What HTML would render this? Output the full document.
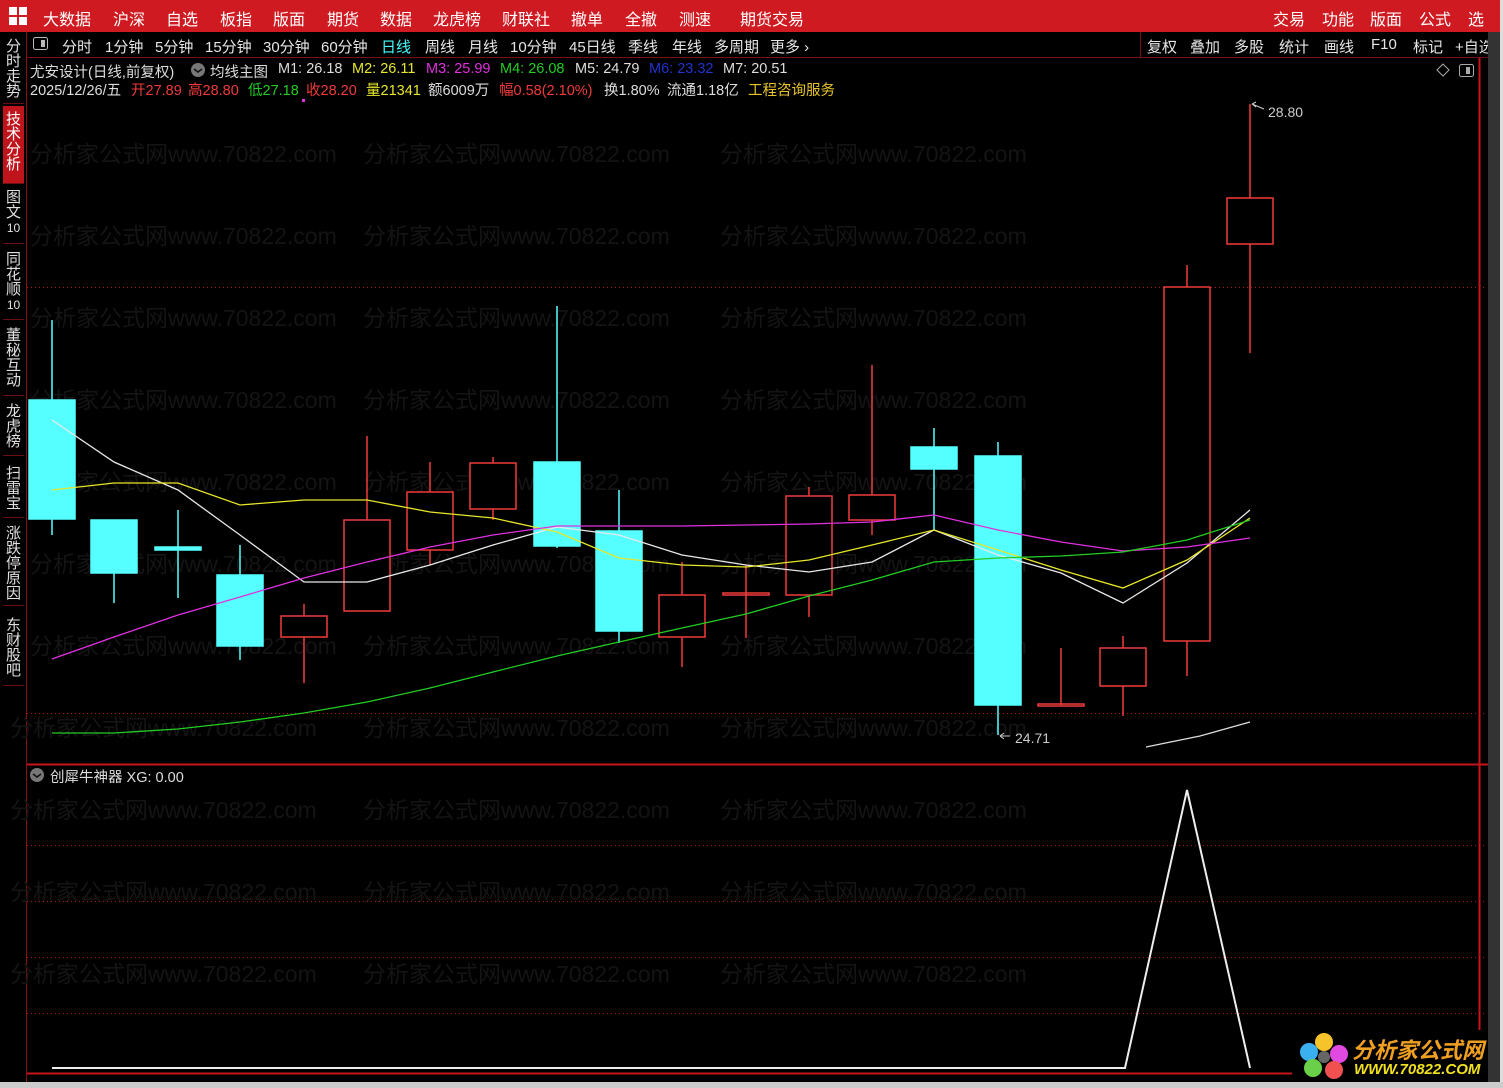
<!DOCTYPE html>
<html><head><meta charset="utf-8"><style>
*{margin:0;padding:0;box-sizing:border-box}
body{width:1503px;height:1088px;background:#000;overflow:hidden;position:relative;font-family:"Liberation Sans","Noto Sans CJK SC",sans-serif;color:#ddd}
#top{position:absolute;left:0;top:0;width:1500px;height:32px;background:#cf1a21}
#top span{position:absolute;top:6px;font-size:16px;color:#fff}
#tb{position:absolute;left:27px;top:32px;width:1461px;height:26px;border-bottom:1px solid #7a1010;overflow:hidden}
#tb span{position:absolute;top:4px;font-size:15px;color:#e6e6e6;white-space:nowrap}
#side{position:absolute;left:0;top:32px;width:27px;height:1056px;background:#000;border-right:1px solid #8a1010}
.si{position:absolute;left:3px;width:21px;font-size:15px;line-height:15px;color:#e0e0e0;text-align:center;border-bottom:1px solid #6a1010}
.wm{position:absolute;font-size:23px;color:#141414;white-space:nowrap}
.il{position:absolute;font-size:14.5px;white-space:nowrap;color:#ddd}
</style></head><body>
<div id="top">
<svg style="position:absolute;left:9px;top:7px" width="19" height="19"><rect x="0" y="0" width="8" height="8" fill="#fff"/><rect x="10" y="0" width="8" height="8" fill="#fff"/><rect x="0" y="10" width="8" height="8" fill="#fff"/><rect x="10" y="10" width="8" height="8" fill="#fff"/></svg>
<span style="left:43px">大数据</span><span style="left:113px">沪深</span><span style="left:166px">自选</span><span style="left:220px">板指</span><span style="left:273px">版面</span><span style="left:327px">期货</span><span style="left:380px">数据</span><span style="left:433px">龙虎榜</span><span style="left:502px">财联社</span><span style="left:571px">撤单</span><span style="left:625px">全撤</span><span style="left:679px">测速</span><span style="left:740px">期货交易</span>
<span style="left:1273px">交易</span><span style="left:1322px">功能</span><span style="left:1370px">版面</span><span style="left:1419px">公式</span><span style="left:1468px">选</span>
</div>
<div id="side">
<div class="si" style="top:4px;height:68px;padding-top:3px">分时走势</div>
<div class="si" style="top:74px;height:78px;padding-top:6px;background:#c0141c;color:#fff">技术分析</div>
<div class="si" style="top:154px;height:58px;padding-top:4px">图文<br><span style="font-size:12px">10</span></div>
<div class="si" style="top:214px;height:74px;padding-top:6px">同花顺<br><span style="font-size:12px">10</span></div>
<div class="si" style="top:290px;height:74px;padding-top:6px">董秘互动</div>
<div class="si" style="top:366px;height:58px;padding-top:6px">龙虎榜</div>
<div class="si" style="top:426px;height:60px;padding-top:8px">扫雷宝</div>
<div class="si" style="top:488px;height:86px;padding-top:6px">涨跌停原因</div>
<div class="si" style="top:576px;height:78px;padding-top:10px">东财股吧</div>
</div>
<div id="tb">
<svg style="position:absolute;left:6px;top:5px" width="15" height="13"><rect x="0.5" y="0.5" width="14" height="12" rx="2" fill="none" stroke="#bbb"/><rect x="8" y="3" width="4" height="7" fill="#bbb"/></svg>
<span style="left:35px">分时</span><span style="left:78px">1分钟</span><span style="left:128px">5分钟</span><span style="left:178px">15分钟</span><span style="left:236px">30分钟</span><span style="left:294px">60分钟</span><span style="left:354px;color:#4ff">日线</span><span style="left:398px">周线</span><span style="left:441px">月线</span><span style="left:483px">10分钟</span><span style="left:542px">45日线</span><span style="left:601px">季线</span><span style="left:645px">年线</span><span style="left:687px">多周期</span><span style="left:743px">更多 ›</span>
<div style="position:absolute;left:1113px;top:0;height:26px;width:350px;border-left:1px solid #7a1010"></div>
<span style="left:1120px">复权</span><span style="left:1163px">叠加</span><span style="left:1207px">多股</span><span style="left:1252px">统计</span><span style="left:1297px">画线</span><span style="left:1344px">F10</span><span style="left:1386px">标记</span><span style="left:1428px">+自选</span>
</div>
<div class="wm" style="left:30px;top:135px">分析家公式网www.70822.com</div><div class="wm" style="left:363px;top:135px">分析家公式网www.70822.com</div><div class="wm" style="left:720px;top:135px">分析家公式网www.70822.com</div>
<div class="wm" style="left:30px;top:217px">分析家公式网www.70822.com</div><div class="wm" style="left:363px;top:217px">分析家公式网www.70822.com</div><div class="wm" style="left:720px;top:217px">分析家公式网www.70822.com</div>
<div class="wm" style="left:30px;top:299px">分析家公式网www.70822.com</div><div class="wm" style="left:363px;top:299px">分析家公式网www.70822.com</div><div class="wm" style="left:720px;top:299px">分析家公式网www.70822.com</div>
<div class="wm" style="left:30px;top:381px">分析家公式网www.70822.com</div><div class="wm" style="left:363px;top:381px">分析家公式网www.70822.com</div><div class="wm" style="left:720px;top:381px">分析家公式网www.70822.com</div>
<div class="wm" style="left:30px;top:463px">分析家公式网www.70822.com</div><div class="wm" style="left:363px;top:463px">分析家公式网www.70822.com</div><div class="wm" style="left:720px;top:463px">分析家公式网www.70822.com</div>
<div class="wm" style="left:30px;top:545px">分析家公式网www.70822.com</div><div class="wm" style="left:363px;top:545px">分析家公式网www.70822.com</div><div class="wm" style="left:720px;top:545px">分析家公式网www.70822.com</div>
<div class="wm" style="left:30px;top:627px">分析家公式网www.70822.com</div><div class="wm" style="left:363px;top:627px">分析家公式网www.70822.com</div><div class="wm" style="left:720px;top:627px">分析家公式网www.70822.com</div>
<div class="wm" style="left:10px;top:709px">分析家公式网www.70822.com</div><div class="wm" style="left:363px;top:709px">分析家公式网www.70822.com</div><div class="wm" style="left:720px;top:709px">分析家公式网www.70822.com</div>
<div class="wm" style="left:10px;top:791px">分析家公式网www.70822.com</div><div class="wm" style="left:363px;top:791px">分析家公式网www.70822.com</div><div class="wm" style="left:720px;top:791px">分析家公式网www.70822.com</div>
<div class="wm" style="left:10px;top:873px">分析家公式网www.70822.com</div><div class="wm" style="left:363px;top:873px">分析家公式网www.70822.com</div><div class="wm" style="left:720px;top:873px">分析家公式网www.70822.com</div>
<div class="wm" style="left:10px;top:955px">分析家公式网www.70822.com</div><div class="wm" style="left:363px;top:955px">分析家公式网www.70822.com</div><div class="wm" style="left:720px;top:955px">分析家公式网www.70822.com</div>
<svg style="position:absolute;left:0;top:0" width="1503" height="1088">
<g stroke="#b01818" stroke-width="1" stroke-dasharray="1,3">
<line x1="27" y1="287.5" x2="1486" y2="287.5"/><line x1="27" y1="713.5" x2="1486" y2="713.5"/>
<line x1="27" y1="845.5" x2="1486" y2="845.5"/><line x1="27" y1="901.5" x2="1486" y2="901.5"/><line x1="27" y1="957.5" x2="1486" y2="957.5"/><line x1="27" y1="1013.5" x2="1486" y2="1013.5"/>
</g>
<line x1="27" y1="764.5" x2="1488" y2="764.5" stroke="#c8141c" stroke-width="2"/>
<line x1="27" y1="1073.5" x2="1488" y2="1073.5" stroke="#c8141c" stroke-width="2"/>
<line x1="1479.5" y1="58" x2="1479.5" y2="1074" stroke="#c8141c" stroke-width="2"/>
<rect x="1488" y="32" width="12" height="1056" fill="#333"/>
<rect x="1500" y="0" width="3" height="1088" fill="#ddd"/>
<rect x="0" y="1082" width="1503" height="6" fill="#ccc"/>
<g stroke="#5ff" fill="#5ff" stroke-width="1.5">
<line x1="52" y1="320" x2="52" y2="535"/><rect x="29" y="400" width="46" height="119"/>
<line x1="114" y1="520" x2="114" y2="603"/><rect x="91" y="520" width="46" height="53"/>
<line x1="178" y1="510" x2="178" y2="598"/><rect x="155" y="547" width="46" height="3"/>
<line x1="240" y1="545" x2="240" y2="660"/><rect x="217" y="575" width="46" height="71"/>
<line x1="557" y1="306" x2="557" y2="548"/><rect x="534" y="462" width="46" height="84"/>
<line x1="619" y1="490" x2="619" y2="643"/><rect x="596" y="531" width="46" height="100"/>
<line x1="934" y1="428" x2="934" y2="530"/><rect x="911" y="447" width="46" height="22"/>
<line x1="998" y1="442" x2="998" y2="735"/><rect x="975" y="456" width="46" height="249"/>
</g>
<g stroke="#f03a3a" fill="none" stroke-width="1.5">
<line x1="304" y1="604" x2="304" y2="683"/><rect x="281" y="616" width="46" height="21" fill="#000"/>
<line x1="367" y1="436" x2="367" y2="611"/><rect x="344" y="520" width="46" height="91" fill="#000"/>
<line x1="430" y1="462" x2="430" y2="565"/><rect x="407" y="492" width="46" height="58" fill="#000"/>
<line x1="493" y1="457" x2="493" y2="520"/><rect x="470" y="463" width="46" height="46" fill="#000"/>
<line x1="682" y1="562" x2="682" y2="667"/><rect x="659" y="595" width="46" height="42" fill="#000"/>
<line x1="746" y1="565" x2="746" y2="638"/><rect x="723" y="593" width="46" height="2"/>
<line x1="809" y1="487" x2="809" y2="617"/><rect x="786" y="496" width="46" height="99" fill="#000"/>
<line x1="872" y1="365" x2="872" y2="535"/><rect x="849" y="495" width="46" height="25" fill="#000"/>
<line x1="1061" y1="648" x2="1061" y2="705"/><rect x="1038" y="704" width="46" height="2"/>
<line x1="1123" y1="636" x2="1123" y2="716"/><rect x="1100" y="648" width="46" height="38" fill="#000"/>
<line x1="1187" y1="265" x2="1187" y2="676"/><rect x="1164" y="287" width="46" height="354" fill="#000"/>
<line x1="1250" y1="104" x2="1250" y2="353"/><rect x="1227" y="198" width="46" height="46" fill="#000"/>
</g>
<g fill="none" stroke-width="1.3">
<polyline stroke="#e8e8e8" points="52,420 114,462 178,490 240,535 304,582 367,582 430,565 493,545 557,527 619,535 682,555 746,565 809,572 872,562 934,530 998,555 1061,573 1123,603 1187,563 1250,510"/>
<polyline stroke="#e6e62a" points="52,490 114,483 178,483 240,505 304,500 367,500 430,512 493,518 557,532 619,558 682,565 746,567 809,560 872,545 934,530 998,550 1061,570 1123,588 1187,560 1250,518"/>
<polyline stroke="#e030e0" points="52,659 114,637 178,615 240,597 304,578 367,562 430,547 493,535 557,526 619,526 682,526 746,525 809,524 872,522 934,515 998,530 1061,542 1123,551 1187,547 1250,538"/>
<polyline stroke="#22cc22" points="52,733 114,733 178,729 240,722 304,713 367,702 430,688 493,672 557,656 619,642 682,628 746,614 809,596 872,580 934,562 998,558 1061,556 1123,552 1187,540 1250,520"/>
<polyline stroke="#ddd" points="1146,747 1200,736 1250,722"/>
<polyline stroke="#eee" stroke-width="2" points="52,1068 1125,1068 1187,790 1250,1068"/>
</g>
<path d="M1252,104 l4,-2 M1252,104 l4,3 M1252,104 l12,5" stroke="#ccc" fill="none"/>
<text x="1268" y="117" fill="#ccc" font-size="14" font-family="Liberation Sans">28.80</text>
<path d="M1000,736 l10,0 M1000,736 l4,-3 M1000,736 l4,3" stroke="#ccc" fill="none"/>
<text x="1015" y="743" fill="#ccc" font-size="14" font-family="Liberation Sans">24.71</text>
<path d="M1443,64 l6,6 -6,6 -6,-6z" fill="none" stroke="#aaa"/>
<rect x="1459.5" y="64.5" width="14" height="12" rx="2" fill="none" stroke="#aaa"/><rect x="1466" y="67" width="4" height="7" fill="#aaa"/>
<circle cx="198" cy="70" r="7" fill="#777"/><path d="M194,69 l4,3 4,-3" stroke="#111" fill="none" stroke-width="1.5"/>
<circle cx="37" cy="775" r="7" fill="#777"/><path d="M33,774 l4,3 4,-3" stroke="#111" fill="none" stroke-width="1.5"/>
<rect x="302" y="99" width="3" height="3" fill="#e030e0"/>
</svg>
<div class="il" style="left:30px;top:61px">尤安设计(日线,前复权)</div>
<div class="il" style="left:210px;top:61px">均线主图</div>
<div class="il" style="left:278px;top:61px">M1: 26.18</div>
<div class="il" style="left:352px;top:61px;color:#e6e62a">M2: 26.11</div>
<div class="il" style="left:426px;top:61px;color:#e030e0">M3: 25.99</div>
<div class="il" style="left:500px;top:61px;color:#22cc22">M4: 26.08</div>
<div class="il" style="left:575px;top:61px">M5: 24.79</div>
<div class="il" style="left:649px;top:61px;color:#2233cc">M6: 23.32</div>
<div class="il" style="left:723px;top:61px">M7: 20.51</div>
<div class="il" style="left:30px;top:79px">2025/12/26/五</div>
<div class="il" style="left:131px;top:79px;color:#f03a3a">开27.89</div>
<div class="il" style="left:188px;top:79px;color:#f03a3a">高28.80</div>
<div class="il" style="left:248px;top:79px;color:#22cc22">低27.18</div>
<div class="il" style="left:306px;top:79px;color:#f03a3a">收28.20</div>
<div class="il" style="left:366px;top:79px;color:#e6e62a">量21341</div>
<div class="il" style="left:428px;top:79px">额6009万</div>
<div class="il" style="left:499px;top:79px;color:#f03a3a">幅0.58(2.10%)</div>
<div class="il" style="left:604px;top:79px">换1.80%</div>
<div class="il" style="left:667px;top:79px">流通1.18亿</div>
<div class="il" style="left:748px;top:79px;color:#e6c42a">工程咨询服务</div>
<div class="il" style="left:50px;top:766px">创犀牛神器 XG: 0.00</div>
<div style="position:absolute;left:1292px;top:1030px;width:196px;height:52px;background:#000">
<svg width="60" height="52" style="position:absolute;left:2px;top:0"><circle cx="30" cy="12" r="9" fill="#f6c42a"/><circle cx="15" cy="22" r="9" fill="#3ab0f0"/><circle cx="45" cy="24" r="9" fill="#e04ae0"/><circle cx="19" cy="38" r="9" fill="#6ad04a"/><circle cx="40" cy="40" r="9" fill="#f05050"/><circle cx="30" cy="27" r="6" fill="#666"/></svg>
<div style="position:absolute;left:60px;top:3px;font-size:22px;font-weight:bold;font-style:italic;color:#f0a020;white-space:nowrap">分析家公式网</div>
<div style="position:absolute;left:62px;top:31px;font-size:15px;font-weight:bold;font-style:italic;color:#f0e020;white-space:nowrap">WWW.70822.COM</div>
</div>
</body></html>
